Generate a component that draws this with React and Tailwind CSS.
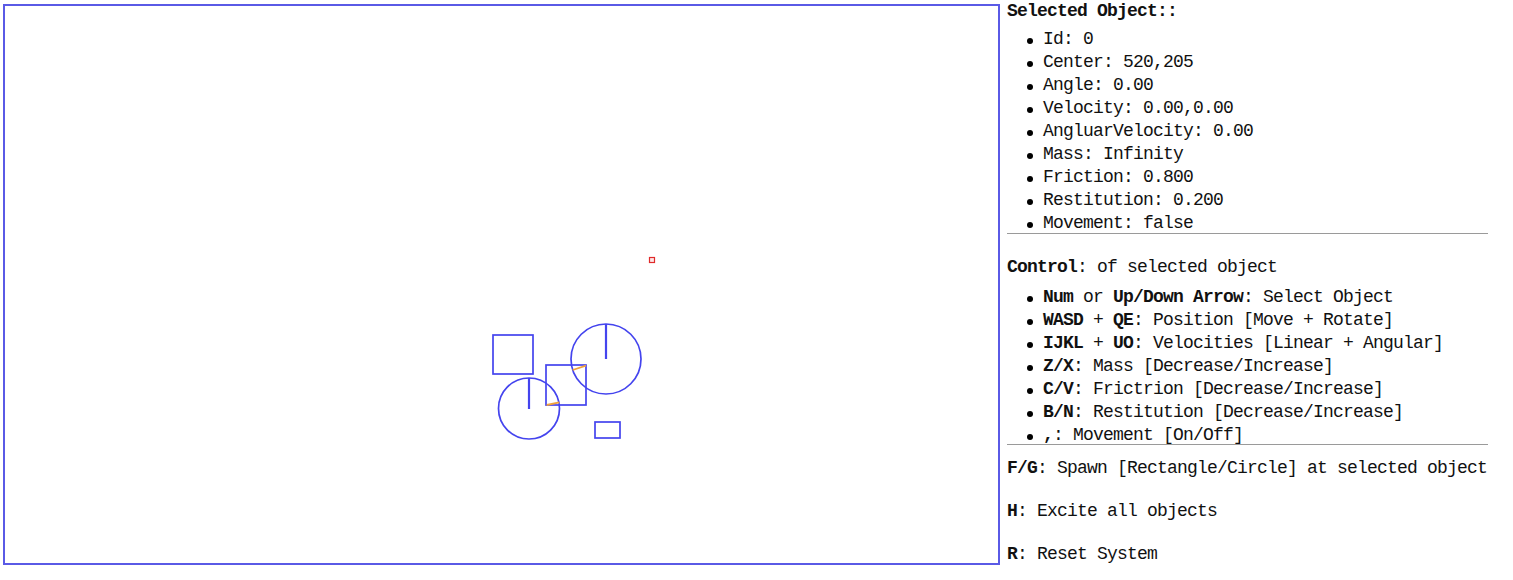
import React from "react";

const B = ({ children }) => <b className="font-bold">{children}</b>;

function Item({ children }) {
  return (
    <li className="flex items-center h-[23px] whitespace-pre">
      <span className="ml-[20px] mr-[10px] mt-[3px] w-[6px] h-[6px] rounded-full bg-black shrink-0" />
      <span>{children}</span>
    </li>
  );
}

export default function App() {
  return (
    <div className="flex items-start bg-white min-h-[580px] text-black">
      <div className="ml-[3px] mt-[4px] w-[997px] h-[561px] border-2 border-[#5a5ae6] relative shrink-0">
        <svg
          className="absolute inset-0"
          width="993"
          height="557"
          viewBox="5 6 993 557"
        >
          <g fill="none" stroke="#4444ee" strokeWidth="1.7">
            <rect x="493" y="335" width="40" height="39" />
            <circle cx="606" cy="359" r="35" />
            <line x1="606" y1="324" x2="606" y2="359" strokeWidth="2.2" />
            <circle cx="529" cy="408.5" r="30.5" />
            <line x1="529" y1="378" x2="529" y2="409" strokeWidth="2.2" />
            <rect x="546" y="365" width="40" height="40" />
            <rect x="595" y="422" width="25" height="16" />
          </g>
          <g stroke="#f0a23a" strokeWidth="1.8">
            <line x1="572.7" y1="370" x2="586" y2="365.7" />
            <line x1="546.7" y1="405" x2="559.3" y2="402.3" />
          </g>
          <rect x="649.5" y="257.5" width="5" height="5" fill="#fde8e8" stroke="#e02a2a" strokeWidth="1.2" />
        </svg>
      </div>
      <div
        className="ml-[7px] w-[481px] shrink-0 font-['Liberation_Mono',monospace] text-[18px] leading-[23px] tracking-[-0.8px] text-[#111]"
      >
        <div className="h-[23px] whitespace-pre">
          <B>Selected Object::</B>
        </div>
        <ul className="mt-[5px]">
          <Item>Id: 0</Item>
          <Item>Center: 520,205</Item>
          <Item>Angle: 0.00</Item>
          <Item>Velocity: 0.00,0.00</Item>
          <Item>AngluarVelocity: 0.00</Item>
          <Item>Mass: Infinity</Item>
          <Item>Friction: 0.800</Item>
          <Item>Restitution: 0.200</Item>
          <Item>Movement: false</Item>
        </ul>
        <div className="mt-[-2px] border-t border-[#9a9a9a]" />
        <div className="mt-[22px] h-[23px] whitespace-pre">
          <B>Control</B>: of selected object
        </div>
        <ul className="mt-[7px]">
          <Item>
            <B>Num</B> or <B>Up/Down Arrow</B>: Select Object
          </Item>
          <Item>
            <B>WASD</B> + <B>QE</B>: Position [Move + Rotate]
          </Item>
          <Item>
            <B>IJKL</B> + <B>UO</B>: Velocities [Linear + Angular]
          </Item>
          <Item>
            <B>Z/X</B>: Mass [Decrease/Increase]
          </Item>
          <Item>
            <B>C/V</B>: Frictrion [Decrease/Increase]
          </Item>
          <Item>
            <B>B/N</B>: Restitution [Decrease/Increase]
          </Item>
          <Item>
            <B>,</B>: Movement [On/Off]
          </Item>
        </ul>
        <div className="mt-[-3px] border-t border-[#9a9a9a]" />
        <div className="mt-[12px] h-[23px] whitespace-pre">
          <B>F/G</B>: Spawn [Rectangle/Circle] at selected object
        </div>
        <div className="mt-[20px] h-[23px] whitespace-pre">
          <B>H</B>: Excite all objects
        </div>
        <div className="mt-[20px] h-[23px] whitespace-pre">
          <B>R</B>: Reset System
        </div>
      </div>
    </div>
  );
}
